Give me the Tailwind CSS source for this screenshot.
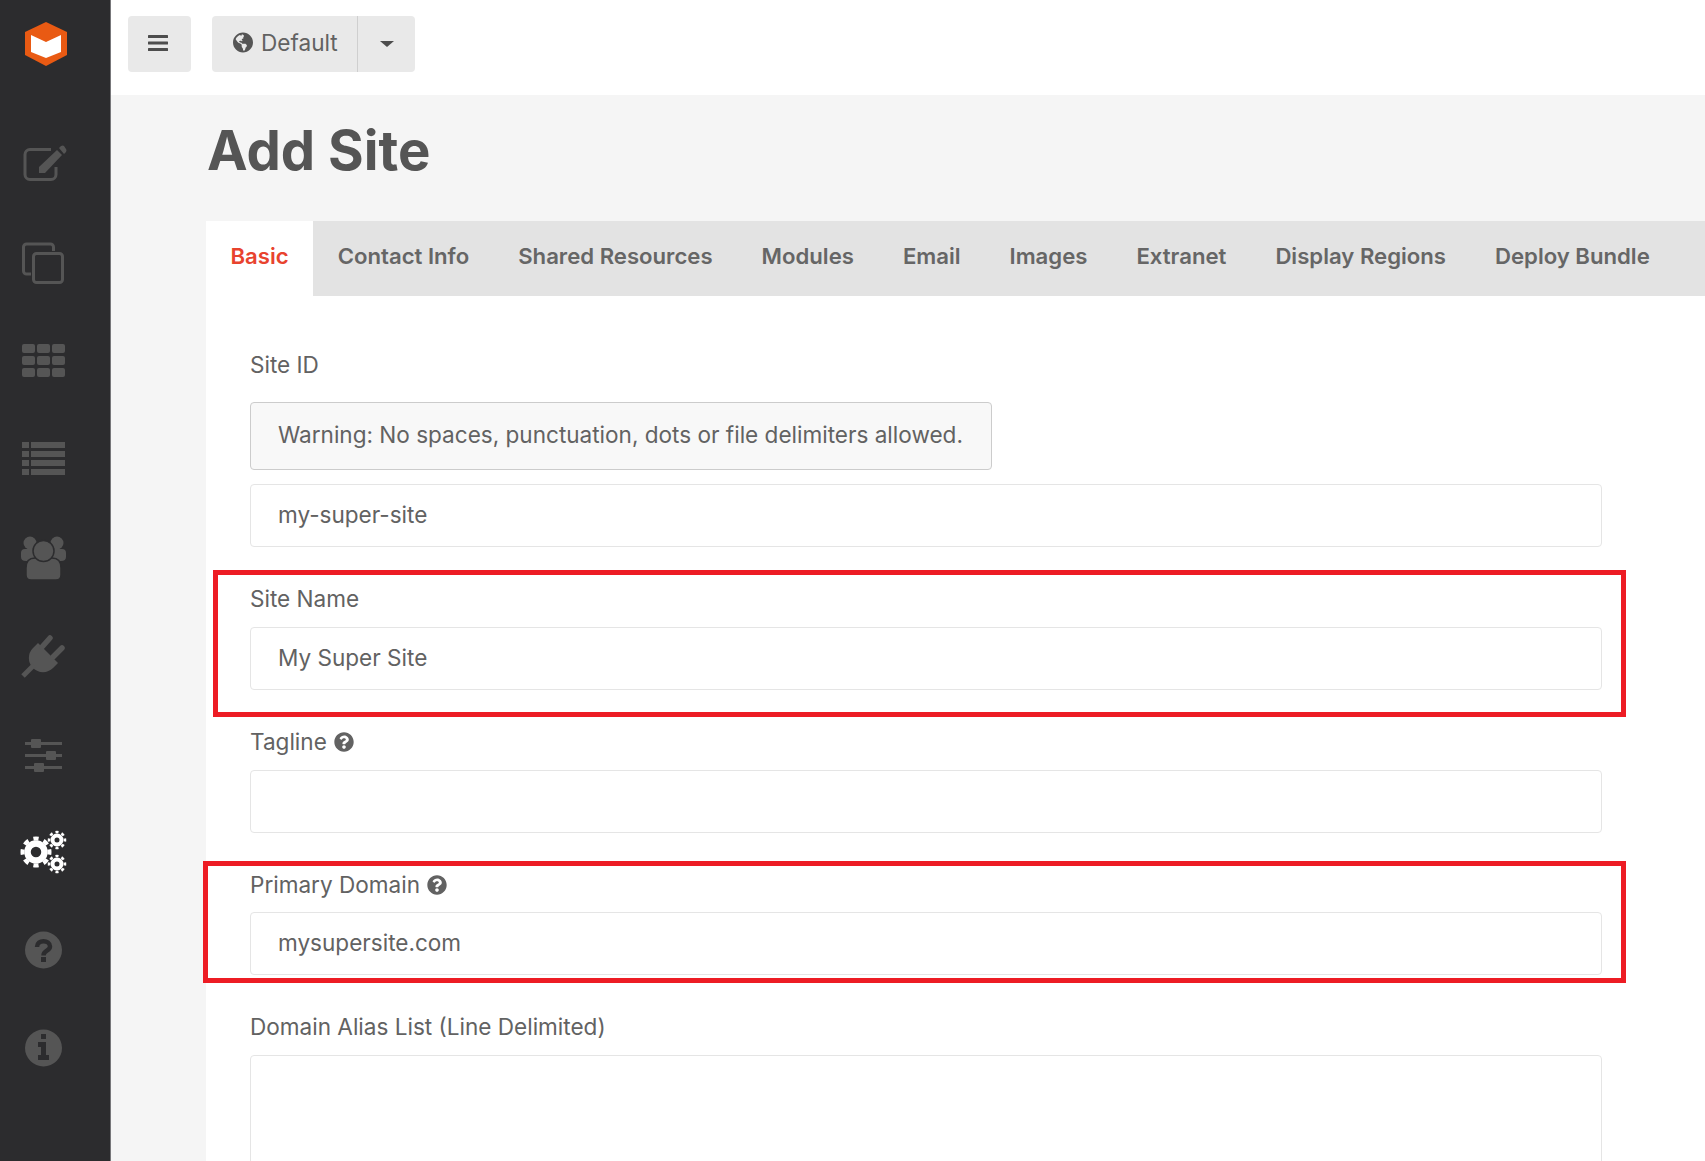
<!DOCTYPE html>
<html lang="en">
<head>
    <meta charset="UTF-8" />
    <meta name="viewport" content="width=device-width, initial-scale=1.0"/>
    <title>Add Site</title>
    <script src="https://cdn.jsdelivr.net/npm/@tailwindcss/browser@4"></script>
</head>
<body class="font-[Inter,sans-serif] text-[#626262] h-[1161px] overflow-hidden flex bg-[#f5f5f5]">
    <!-- icon rail -->
    <aside class="w-[111px] h-full bg-[#2c2c2e] shrink-0 pl-5 text-[#555555] border-r border-[#77777a]">
        <div class="h-[140px] pt-5">
            <svg viewBox="0 0 48 48" class="w-12 h-12">
                <path fill="#e95a13" d="M26 2 47 12V35L26 46 5 35V12Z"/>
                <path fill="#ffffff" d="M11 15 26 22 41 15V32L26 38 11 32Z"/>
            </svg>
        </div>
        <div class="h-[98px]">
            <svg viewBox="0 0 48 48" class="w-12 h-12" fill="currentColor">
                <path fill="none" stroke="currentColor" stroke-width="3" d="M31 9.500H10a5 5 0 0 0-5 5v20a5 5 0 0 0 5 5h21a5 5 0 0 0 5-5V27"/>
                <path d="M19 27 37 10 42 15 25 33H19Z"/>
                <path d="M39 8l2-2q2-1 3 0l2 3q1 1 0 3l-2 2Z"/>
            </svg>
        </div>
        <div class="h-[98px]">
            <svg viewBox="0 0 48 48" class="w-12 h-12" fill="none" stroke="currentColor" stroke-width="3">
                <path d="M33.500 13V9a3 3 0 0 0-3-3H6.500a3 3 0 0 0-3 3v24a3 3 0 0 0 3 3H11"/>
                <rect x="13.500" y="15.500" width="29" height="29" rx="3"/>
            </svg>
        </div>
        <div class="h-[98px]">
            <svg viewBox="0 0 48 48" class="w-12 h-12" fill="currentColor">
                <rect x="2" y="8" width="13" height="9" rx="2"/><rect x="17" y="8" width="13" height="9" rx="2"/><rect x="32" y="8" width="13" height="9" rx="2"/>
                <rect x="2" y="20" width="13" height="9" rx="2"/><rect x="17" y="20" width="13" height="9" rx="2"/><rect x="32" y="20" width="13" height="9" rx="2"/>
                <rect x="2" y="32" width="13" height="9" rx="2"/><rect x="17" y="32" width="13" height="9" rx="2"/><rect x="32" y="32" width="13" height="9" rx="2"/>
            </svg>
        </div>
        <div class="h-[98px]">
            <svg viewBox="0 0 48 48" class="w-12 h-12" fill="currentColor">
                <rect x="2" y="8" width="7" height="6"/><rect x="11" y="8" width="34" height="6"/>
                <rect x="2" y="17" width="7" height="6"/><rect x="11" y="17" width="34" height="6"/>
                <rect x="2" y="26" width="7" height="6"/><rect x="11" y="26" width="34" height="6"/>
                <rect x="2" y="35" width="7" height="6"/><rect x="11" y="35" width="34" height="6"/>
            </svg>
        </div>
        <div class="h-[98px]">
            <svg viewBox="0 0 48 48" class="w-12 h-12" fill="currentColor">
                <circle cx="10" cy="11" r="6.500"/><circle cx="37" cy="11" r="6.500"/>
                <path d="M1 21q0-4 4-4h10v12H6q-5 0-5-4ZM46 21q0-4-4-4H32v12h9q5 0 5-4Z"/>
                <path stroke="#2c2c2e" stroke-width="1.500" d="M6 47V36q0-10 9-10h17q9 0 9 10v7q0 5-5 5H11q-5 0-5-5Z"/>
                <circle cx="23.500" cy="19" r="10.500" stroke="#2c2c2e" stroke-width="1.500"/>
            </svg>
        </div>
        <div class="h-[98px]">
            <svg viewBox="0 0 48 48" class="w-12 h-12" fill="currentColor">
                <path d="M18 13 38 33 33 38A13 13 0 0 1 13 18Z"/>
                <path fill="none" stroke="currentColor" stroke-width="5.500" stroke-linecap="round" d="M30 8 22 17M42 18 33 27"/>
                <path fill="none" stroke="currentColor" stroke-width="5" d="M3 46 14 35"/>
            </svg>
        </div>
        <div class="h-[98px]">
            <svg viewBox="0 0 48 48" class="w-12 h-12" fill="currentColor">
                <rect x="5" y="14" width="37" height="3"/><rect x="5" y="26" width="37" height="3"/><rect x="5" y="38" width="37" height="3"/>
                <rect x="11" y="11" width="10" height="9" rx="1"/><rect x="26" y="23" width="10" height="9" rx="1"/><rect x="14" y="35" width="10" height="9" rx="1"/>
            </svg>
        </div>
        <div class="h-[98px]">
            <svg viewBox="0 0 48 48" class="w-12 h-12" fill="none" stroke="#ffffff">
                <circle cx="16" cy="26" r="8.500" stroke-width="6.500"/>
                <circle cx="16" cy="26" r="13.500" stroke-width="4" pathLength="16" stroke-dasharray="1 1" stroke-dashoffset="0.500"/>
                <circle cx="37" cy="14" r="4.500" stroke-width="4"/>
                <circle cx="37" cy="14" r="8" stroke-width="2.500" pathLength="16" stroke-dasharray="1 1" stroke-dashoffset="0.500"/>
                <circle cx="37" cy="38" r="4.500" stroke-width="4"/>
                <circle cx="37" cy="38" r="8" stroke-width="2.500" pathLength="16" stroke-dasharray="1 1" stroke-dashoffset="0.500"/>
            </svg>
        </div>
        <div class="h-[98px]">
            <svg viewBox="0 0 48 48" class="w-12 h-12" fill="currentColor">
                <circle cx="23.500" cy="26" r="18.500"/>
                <path fill="none" stroke="#2c2c2e" stroke-width="4.500" d="M17 23C17 15 30 15.500 30 22.500 30 27 23.500 26.500 23.500 31.500"/>
                <rect x="21" y="33" width="5" height="5" fill="#2c2c2e"/>
            </svg>
        </div>
        <div class="h-[89px]">
            <svg viewBox="0 0 48 48" class="w-12 h-12" fill="currentColor">
                <circle cx="23.500" cy="26" r="18.500"/>
                <path fill="#2c2c2e" d="M21 12h5v5h-5ZM18 20h8v13h3v5H18V33h3V25h-3Z"/>
            </svg>
        </div>
    </aside>

    <div class="flex-1 min-w-0">
        <header class="h-[95px] bg-white pt-4 pl-[17px] flex items-start gap-[21px]">
            <button class="w-[63px] h-14 pr-1 pb-0.5 bg-[#e9e9e9] rounded flex items-center justify-center text-[#4d4d4d]">
                <svg viewBox="0 0 20 16" class="w-5 h-4" fill="currentColor"><rect y="0" width="20" height="3" rx="0.500"/><rect y="6.500" width="20" height="3" rx="0.500"/><rect y="13" width="20" height="3" rx="0.500"/></svg>
            </button>
            <div class="flex h-14 bg-[#e9e9e9] rounded">
                <button class="w-[146px] pl-[21px] pb-[3px] flex items-center gap-[8px] text-[22.600px] border-r border-[#cfcfcf]">
                    <svg viewBox="0 0 496 512" class="w-5 h-[21px] text-[#555555]" fill="currentColor"><path d="M248 8C111.030 8 0 119.030 0 256s111.030 248 248 248 248-111.030 248-248S384.970 8 248 8zm82.290 357.600c-3.900 3.880-7.990 7.950-11.310 11.280-2.990 3-5.100 6.700-6.170 10.710-1.510 5.660-2.730 11.380-4.770 16.870l-17.390 46.850c-13.760 3-28 4.690-42.650 4.690v-27.380c1.690-12.620-7.640-36.260-22.630-51.250-6-6-9.370-14.140-9.370-22.630v-32.010c0-11.640-6.270-22.340-16.460-27.970-14.370-7.950-34.810-19.060-48.810-26.110-11.480-5.780-22.100-13.140-31.650-21.750l-.8-.72a114.792 114.792 0 0 1-18.060-20.740c-9.380-13.770-24.660-36.420-34.590-51.140 20.470-45.500 57.360-82.040 103.200-101.890l24.010 12.010C203.480 89.740 216 82.010 216 70.110v-11.300c7.990-1.290 16.120-2.110 24.390-2.420l28.300 28.300c6.250 6.250 6.250 16.380 0 22.630L264 112l-10.340 10.340c-3.120 3.120-3.120 8.190 0 11.310l4.690 4.690c3.120 3.120 3.120 8.190 0 11.310l-8 8a8.008 8.008 0 0 1-5.660 2.340h-8.990c-2.080 0-4.080.81-5.580 2.270l-9.920 9.650a8.008 8.008 0 0 0-1.580 9.310l15.590 31.190c2.660 5.320-1.210 11.580-7.150 11.580h-5.640c-1.930 0-3.790-.7-5.240-1.960l-9.280-8.060a16.017 16.017 0 0 0-15.550-3.100l-31.170 10.390a11.950 11.950 0 0 0-8.170 11.340c0 4.530 2.560 8.660 6.610 10.690l11.080 5.540c9.410 4.710 19.790 7.160 30.310 7.160s22.590 27.290 32 32h66.750c8.490 0 16.620 3.370 22.630 9.370l13.690 13.690a30.503 30.503 0 0 1 8.930 21.570 46.536 46.536 0 0 1-13.720 32.980z"/></svg>
                    Default
                </button>
                <button class="w-[57px] flex items-center justify-center">
                    <span class="block w-0 h-0 border-x-[7px] border-x-transparent border-t-[6px] border-t-[#4d4d4d]"></span>
                </button>
            </div>
        </header>

        <main class="pl-[95px]">
            <h1 class="h-[126px] pt-[22px] pl-px text-[54.500px] leading-[66px] font-bold text-[#555555]">Add Site</h1>

            <nav class="h-[75px] bg-[#e3e3e3] flex whitespace-nowrap text-[22.150px] font-semibold text-[#666666]">
                <a class="px-[24.500px] pb-[3px] flex items-center bg-white text-[#e8432e]">Basic</a>
                <a class="px-[24.500px] pb-[3px] flex items-center">Contact Info</a>
                <a class="px-[24.500px] pb-[3px] flex items-center">Shared Resources</a>
                <a class="px-[24.500px] pb-[3px] flex items-center">Modules</a>
                <a class="px-[24.500px] pb-[3px] flex items-center">Email</a>
                <a class="px-[24.500px] pb-[3px] flex items-center">Images</a>
                <a class="px-[24.500px] pb-[3px] flex items-center">Extranet</a>
                <a class="px-[24.500px] pb-[3px] flex items-center">Display Regions</a>
                <a class="px-[24.500px] pb-[3px] flex items-center">Deploy Bundle</a>
            </nav>

            <form class="relative bg-white pl-11 pr-[103px] pt-[55px] text-[22.550px] h-[865px]">
                <label class="block h-7 leading-7 mb-[23px]">Site ID</label>
                <div class="w-[742px] h-[68px] mb-[14px] pl-[27px] pb-0.5 flex items-center bg-[#f8f8f8] border border-[#cccccc] rounded">Warning: No spaces, punctuation, dots or file delimiters allowed.</div>
                <input readonly value="my-super-site" class="block w-full h-[63px] mb-[38px] pl-[27px] pb-0.5 border border-[#e5e5e5] rounded outline-none" />

                <label class="block h-7 leading-7 mb-[14px]">Site Name</label>
                <input readonly value="My Super Site" class="block w-full h-[63px] mb-[38px] pl-[27px] pb-0.5 border border-[#e5e5e5] rounded outline-none" />

                <label class="flex items-center gap-[7px] h-7 leading-7 mb-[14px]">Tagline
                    <svg viewBox="0 0 512 512" class="w-5 h-5" fill="currentColor"><path d="M504 256c0 136.997-111.043 248-248 248S8 392.997 8 256C8 119.083 119.043 8 256 8s248 111.083 248 248zM262.655 90c-54.497 0-89.255 22.957-116.549 63.758-3.536 5.286-2.353 12.415 2.715 16.258l34.699 26.31c5.205 3.947 12.621 3.008 16.665-2.122 17.864-22.658 30.113-35.797 57.303-35.797 20.429 0 45.698 13.148 45.698 32.958 0 14.976-12.363 22.667-32.534 33.976C247.128 238.528 216 254.941 216 296v4c0 6.627 5.373 12 12 12h56c6.627 0 12-5.373 12-12v-1.333c0-28.462 83.186-29.647 83.186-106.667 0-58.002-60.165-102-116.531-102zM256 338c-25.365 0-46 20.635-46 46 0 25.364 20.635 46 46 46s46-20.636 46-46c0-25.365-20.635-46-46-46z"/></svg>
                </label>
                <input readonly class="block w-full h-[63px] mb-[38px] pl-[27px] border border-[#e5e5e5] rounded outline-none" />

                <label class="flex items-center gap-[7px] h-7 leading-7 mb-[13px]">Primary Domain
                    <svg viewBox="0 0 512 512" class="w-5 h-5" fill="currentColor"><path d="M504 256c0 136.997-111.043 248-248 248S8 392.997 8 256C8 119.083 119.043 8 256 8s248 111.083 248 248zM262.655 90c-54.497 0-89.255 22.957-116.549 63.758-3.536 5.286-2.353 12.415 2.715 16.258l34.699 26.31c5.205 3.947 12.621 3.008 16.665-2.122 17.864-22.658 30.113-35.797 57.303-35.797 20.429 0 45.698 13.148 45.698 32.958 0 14.976-12.363 22.667-32.534 33.976C247.128 238.528 216 254.941 216 296v4c0 6.627 5.373 12 12 12h56c6.627 0 12-5.373 12-12v-1.333c0-28.462 83.186-29.647 83.186-106.667 0-58.002-60.165-102-116.531-102zM256 338c-25.365 0-46 20.635-46 46 0 25.364 20.635 46 46 46s46-20.636 46-46c0-25.365-20.635-46-46-46z"/></svg>
                </label>
                <input readonly value="mysupersite.com" class="block w-full h-[63px] mb-[38px] pl-[27px] pb-0.5 border border-[#e5e5e5] rounded outline-none" />

                <label class="block h-7 leading-7 mb-[14px]">Domain Alias List (Line Delimited)</label>
                <div class="h-[106px] overflow-hidden">
                    <div class="h-[300px] border border-[#e5e5e5] rounded"></div>
                </div>

                <!-- annotation boxes drawn on top of the form -->
                <div class="absolute left-[7px] top-[274px] w-[1413px] h-[147px] border-[5px] border-[#ed1c24]"></div>
                <div class="absolute left-[-3px] top-[565px] w-[1423px] h-[122px] border-[5px] border-[#ed1c24]"></div>
            </form>
        </main>
    </div>
</body>
</html>
